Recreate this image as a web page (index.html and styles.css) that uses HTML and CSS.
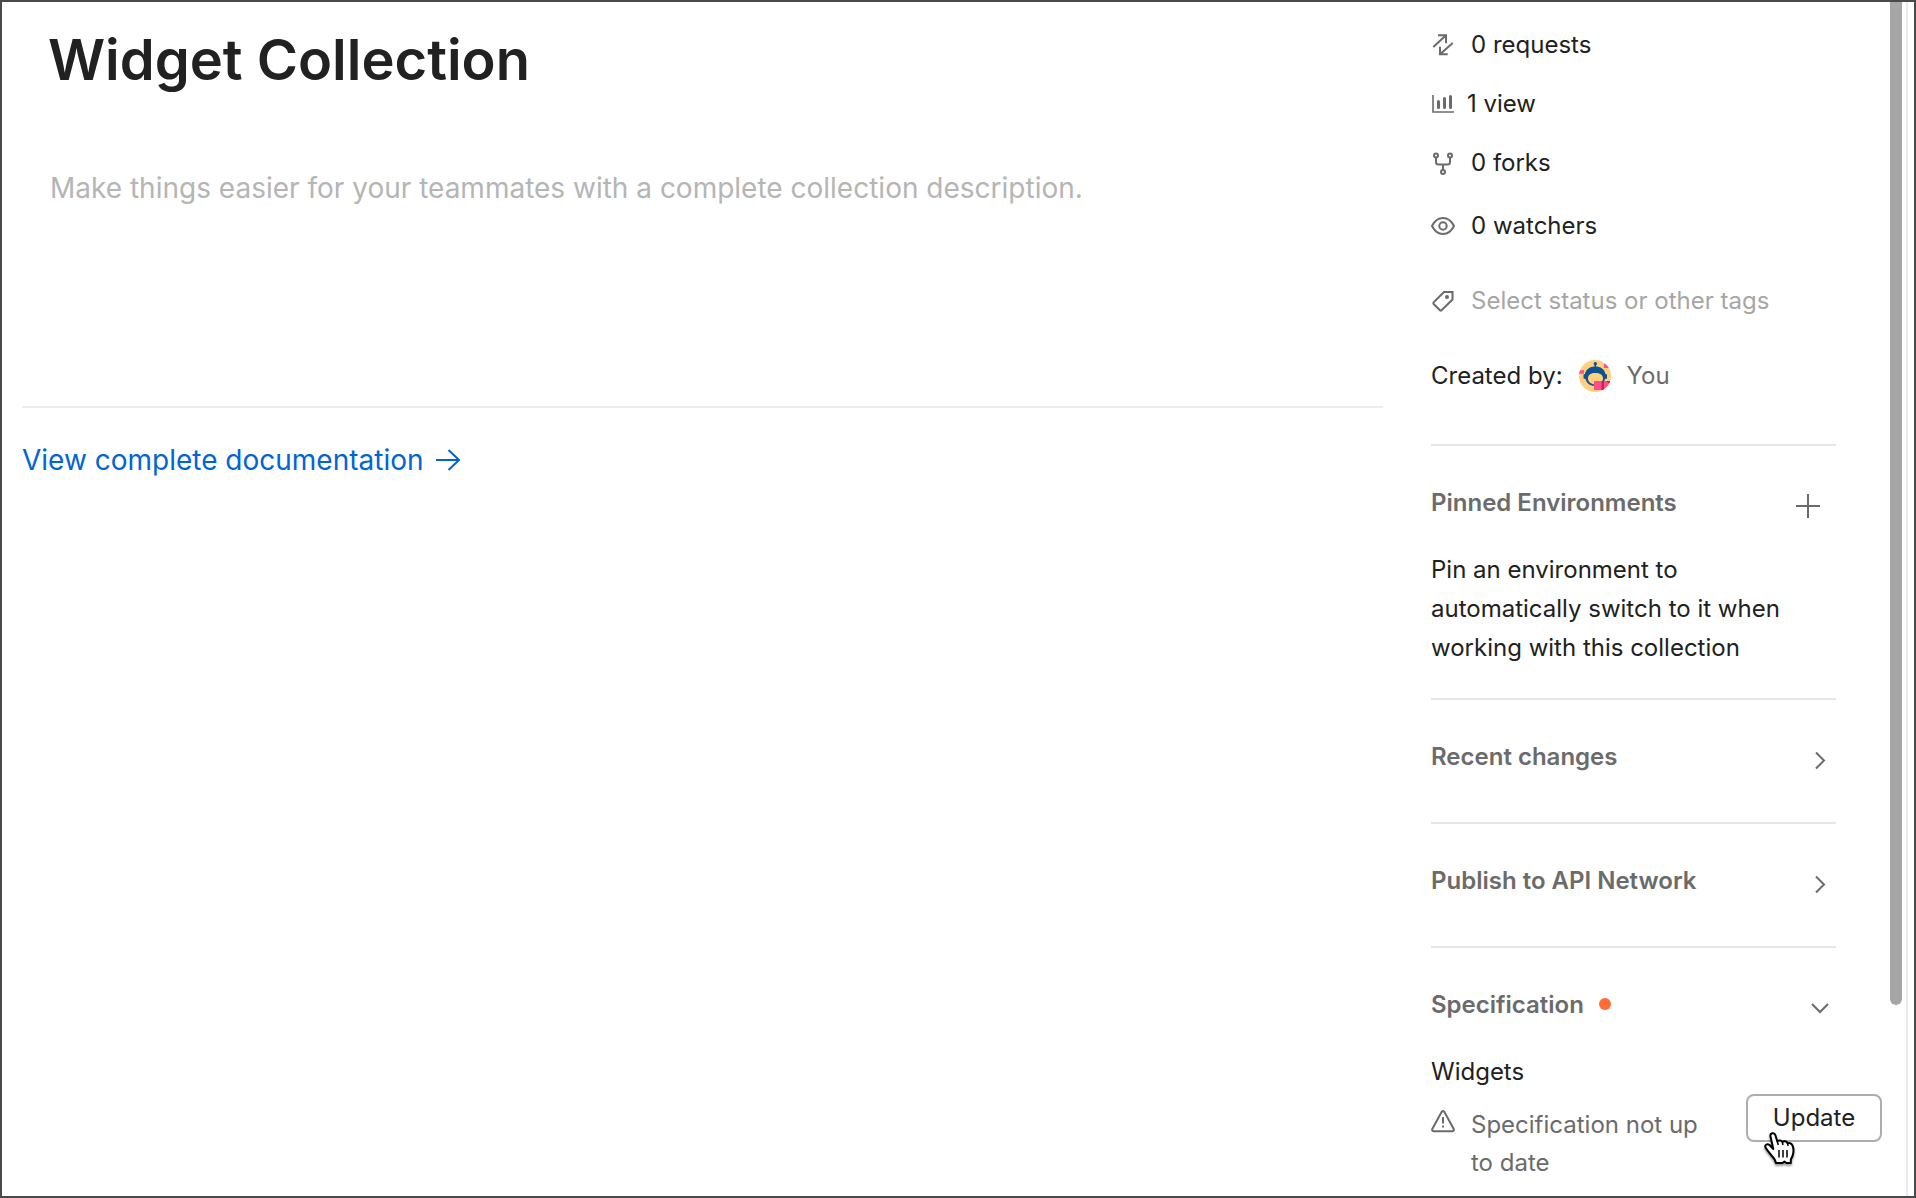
FILE: index.html
```
<!DOCTYPE html>
<html lang="en">
<head>
<meta charset="UTF-8">
<meta name="viewport" content="width=device-width, initial-scale=1.0">
<title>Widget Collection</title>
<link rel="stylesheet" href="styles.css">
</head>
<body>

<div class="window">
  <main class="content">
    <div class="intro">
      <h1>Widget Collection</h1>
      <textarea class="description" aria-label="Collection description" placeholder="Make things easier for your teammates with a complete collection description."></textarea>
    </div>
    <a class="docs-link" href="#">
      View complete documentation
      <svg class="icon" viewBox="0 0 24 24"><path d="M0 12H23M12.500 2L23 12L12.500 22"/></svg>
    </a>
  </main>

  <aside class="sidebar">
    <ul class="stats">
      <li>
        <svg class="icon" viewBox="0 1 24 24"><path d="M2.300 15L15 3.300M7 3.300H15V11.300M21.700 11L9 22.300M9 14.700V22.300H16.700"/></svg>
        0 requests
      </li>
      <li class="views">
        <svg class="icon" viewBox="0 1 24 24"><path class="thin" d="M2 4V21H23"/><path class="bars" d="M7.500 10.500V16.500M13.500 7.500V16.500M19.500 5.500V16.500"/></svg>
        1 view
      </li>
      <li>
        <svg class="icon" viewBox="0 1 24 24"><circle cx="5" cy="5.500" r="2"/><circle cx="19" cy="5.500" r="2"/><circle cx="12" cy="22" r="2"/><path d="M5 8V12Q5 14.500 7.500 14.500H16.500Q19 14.500 19 12V8M12 14.500V20"/></svg>
        0 forks
      </li>
      <li class="watchers">
        <svg class="icon" viewBox="0 1 24 24"><path d="M1 13C3.500 8 7.500 5 12 5S20.500 8 23 13C20.500 18 16.500 21 12 21S3.500 18 1 13Z"/><circle cx="12" cy="13" r="3.700"/></svg>
        0 watchers
      </li>
    </ul>

    <div class="tags">
      <svg class="icon" viewBox="0 1 24 24"><path d="M13 4H21.500V11.500L10.500 22.300Q9.700 23 9 22.300L2.600 16Q2 15.200 2.600 14.400Z"/><circle class="fill" cx="16" cy="9" r="2"/></svg>
      <input type="text" aria-label="Tags" placeholder="Select status or other tags">
    </div>

    <div class="author">
      <span>Created by:</span>
      <svg class="avatar" viewBox="0 0 32 32">
        <clipPath id="round"><circle cx="16" cy="16" r="16"/></clipPath>
        <g clip-path="url(#round)">
          <rect width="32" height="32" fill="#ffd07d"/>
          <path d="M0 10.500L5 10V13.500L0 14Z" fill="#ff4f86"/>
          <path d="M25 4V8H30V7L26 3Z" fill="#ff4f86"/>
          <path d="M16.300 3V8" stroke="#0b5394" stroke-width="1.500"/>
          <circle cx="16.300" cy="3.700" r="1.700" fill="#0b5394"/>
          <path d="M4.500 14.500L6 14C7 9 11 6.500 16.300 6.500S25.500 9 26.500 14L28 14.500V18.500L26 19C25 23.500 21 26 16.300 26S7.500 23.500 6.500 19L4.500 18.500Z" fill="#0b5394"/>
          <path d="M9 18.500C9 14.500 12 13 16.300 13S24 14.500 24 18.500C24 22 20 24.500 16.300 24.500S9 22 9 18.500Z" fill="#ffd07d"/>
          <rect x="15" y="21" width="17" height="9" fill="#ff4f86"/>
          <path d="M22.500 21V30H25V21ZM27 21H32V25Z" fill="#c2255c"/>
        </g>
      </svg>
      <span class="name">You</span>
    </div>

    <section>
      <header>
        <h2>Pinned Environments</h2>
        <button class="icon-btn add" aria-label="Pin an environment"><svg class="icon" viewBox="0 0 24 24"><path d="M12 0V24M0 12H24"/></svg></button>
      </header>
      <p class="hint">Pin an environment to automatically switch to it when working with this collection</p>
    </section>

    <section class="closed">
      <header>
        <h2>Recent changes</h2>
        <button class="icon-btn" aria-label="Show recent changes"><svg class="icon" viewBox="0 0 24 24"><path d="M8 4.500L16 12.500L8 20.500"/></svg></button>
      </header>
    </section>

    <section class="closed">
      <header>
        <h2>Publish to API Network</h2>
        <button class="icon-btn" aria-label="Show publishing"><svg class="icon" viewBox="0 0 24 24"><path d="M8 4.500L16 12.500L8 20.500"/></svg></button>
      </header>
    </section>

    <section>
      <header>
        <h2>Specification</h2>
        <span class="dot"></span>
        <button class="icon-btn" aria-label="Hide specification"><svg class="icon" viewBox="0 0 24 24"><path d="M4 8L12 16L20 8"/></svg></button>
      </header>
      <p class="spec-name">Widgets</p>
      <div class="spec-row">
        <svg class="icon" viewBox="0 0 24 24"><path d="M10.700 2.800Q12 1.300 13.300 2.800L22.700 20Q23.300 22 21.500 22.300H2.500Q.700 22 1.300 20Z"/><path d="M12 8V14.500M12 16.500V18.500"/></svg>
        <p>Specification not up to date</p>
        <div class="update">
          <button class="update-btn">Update</button>
          <svg class="cursor" viewBox="0 0 32 36">
            <path class="hand" d="M6.500 4.500C5.600 1 10.400 0 11.300 3L13.300 9.500C14.500 8 17.500 8 18.300 10C20 8.500 23 9 23.600 11.500C25 10.500 27.500 11 28.500 13.500C30 17 29.500 21 28.500 24L26.800 27.500V31H22.500L20.500 29.500L18.500 31H11.800C11.500 28 9.500 25.500 7.500 23.500C5 20.500 3 18 1.500 15.500C.500 13 3 11.500 5.500 13L9.300 17Z"/>
            <path class="lines" d="M15 18V25.500M19 18V25.500M23 18V25.500M13.300 9.500L14.300 13M18.300 10L19 13M23.600 11.500L24 14"/>
          </svg>
        </div>
      </div>
    </section>
  </aside>

  <div class="scroll-track"><div class="scroll-thumb"></div></div>
</div>

</body>
</html>
```
FILE: styles.css
```
* { box-sizing: border-box; margin: 0; padding: 0; }

body {
  background: #fff; color: #212121;
  font-family: Inter, "Liberation Sans", sans-serif;
  font-size: 24px; line-height: 38px;
}
input, textarea, button { font: inherit; color: inherit; background: none; border: none; outline: none; }
button { cursor: pointer; }
ul { list-style: none; }

.window {
  display: flex; height: 100vh; overflow: hidden;
  border: 2px solid #4a494b;
}

.icon {
  width: 24px; height: 24px; flex: none; display: block;
  fill: none; stroke: #6b6b6b; stroke-width: 2;
}
.icon .thin { stroke-width: 1.6; }
.icon .bars { stroke-width: 3; stroke-linecap: round; }
.icon .fill { fill: #6b6b6b; stroke: none; }

/* Left column */
.content { flex: 1; min-width: 0; padding-left: 20px; }
.intro {
  height: 406px; padding: 24px 26px 0; margin-bottom: 35px;
  border-bottom: 2px solid #ededed;
}
h1 { font-size: 56px; line-height: 68px; font-weight: 600; }
.description {
  display: block; width: 100%; height: 200px; margin-top: 77px; padding: 0 2px;
  font-size: 28px; line-height: 34px; resize: none;
}
.description::placeholder { color: #b5b5b5; }
.docs-link {
  display: inline-flex; align-items: center; gap: 12px;
  color: #0265d2; font-size: 28px; line-height: 34px; text-decoration: none;
}
.docs-link .icon { stroke: #0265d2; }

/* Right column */
.sidebar { flex: none; width: 405px; margin: 24px 54px 0 48px; }
.stats li, .tags, .author { display: flex; align-items: center; gap: 16px; }
.stats li { margin-bottom: 21px; }
.stats .views { gap: 12px; }
.stats .watchers { margin: 25px 0 37px; }
.tags { margin-bottom: 37px; }
.tags input { flex: 1; min-width: 0; height: 38px; }
.tags input::placeholder { color: #a6a6a6; }
.author { margin-bottom: 49px; }
.avatar { width: 32px; height: 32px; }
.name { color: #6b6b6b; }

section { border-top: 2px solid #e6e6e6; padding: 38px 0 31px; }
section.closed { padding-bottom: 46px; }
header { display: flex; align-items: flex-end; }
h2 { font-size: 24px; font-weight: 600; color: #6b6b6b; }
.icon-btn { height: 32px; margin: 0 4px 0 auto; }
.icon-btn.add { margin-right: 16px; }
.hint { margin-top: 28px; padding-right: 36px; line-height: 39px; }
.spec-name { margin-top: 29px; }
.dot {
  width: 12px; height: 12px; margin: 0 0 2px 15px; align-self: center;
  border-radius: 50%; background: #ff6c37;
}

.spec-row { display: flex; gap: 16px; margin: 3px -46px 0 0; }
.spec-row .icon { margin-top: 15px; }
.spec-row p { flex: 1; padding: 12px 24px 0 0; color: #6b6b6b; }
.update { position: relative; }
.update-btn {
  width: 136px; height: 48px;
  border: 2px solid #adadad; border-radius: 8px;
}
.cursor {
  position: absolute; left: 18px; top: 38px; width: 32px; height: 36px;
  filter: drop-shadow(0 2px 1px rgba(0,0,0,.4)); pointer-events: none;
}
.hand { fill: #fff; stroke: #000; stroke-width: 2; stroke-linejoin: round; }
.lines { fill: none; stroke: #000; stroke-width: 1.5; }

.scroll-track { flex: none; width: 18px; margin-right: 6px; border-right: 2px solid #ebebeb; }
.scroll-thumb { width: 12px; height: 84%; background: #a6a6a6; border-radius: 0 0 6px 6px; }
```
